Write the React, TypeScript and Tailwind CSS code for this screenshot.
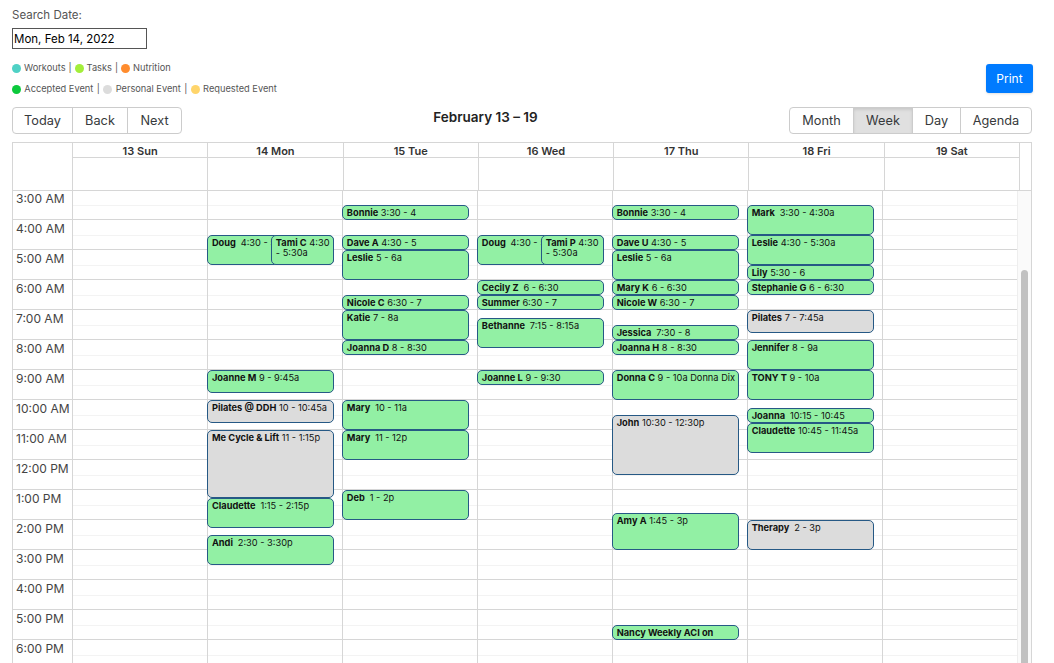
import React from 'react';

type CalEvent = {
  name: string;
  time?: string;
  start: number;
  end: number;
  gray?: boolean;
  left?: number;
};

const HOURS = ['3:00 AM', '4:00 AM', '5:00 AM', '6:00 AM', '7:00 AM', '8:00 AM', '9:00 AM', '10:00 AM', '11:00 AM', '12:00 PM', '1:00 PM', '2:00 PM', '3:00 PM', '4:00 PM', '5:00 PM', '6:00 PM'];
const DAYS = ['13 Sun', '14 Mon', '15 Tue', '16 Wed', '17 Thu', '18 Fri', '19 Sat'];
const SLOT = 30;

const EVENTS: CalEvent[][] = [
  [],
  [
    { name: 'Doug\u00a0', time: '4:30 - 5:30a', start: 4.5, end: 5.5 },
    { name: 'Tami C', time: '4:30 - 5:30a', start: 4.5, end: 5.5, left: 47 },
    { name: 'Joanne M', time: '9 - 9:45a', start: 9, end: 9.75 },
    { name: 'Pilates @ DDH', time: '10 - 10:45a', start: 10, end: 10.75, gray: true },
    { name: 'Me Cycle & Lift', time: '11 - 1:15p', start: 11, end: 13.25, gray: true },
    { name: 'Claudette\u00a0', time: '1:15 - 2:15p', start: 13.25, end: 14.25 },
    { name: 'Andi\u00a0', time: '2:30 - 3:30p', start: 14.5, end: 15.5 },
  ],
  [
    { name: 'Bonnie', time: '3:30 - 4', start: 3.5, end: 4 },
    { name: 'Dave A', time: '4:30 - 5', start: 4.5, end: 5 },
    { name: 'Leslie', time: '5 - 6a', start: 5, end: 6 },
    { name: 'Nicole C', time: '6:30 - 7', start: 6.5, end: 7 },
    { name: 'Katie', time: '7 - 8a', start: 7, end: 8 },
    { name: 'Joanna D', time: '8 - 8:30', start: 8, end: 8.5 },
    { name: 'Mary\u00a0', time: '10 - 11a', start: 10, end: 11 },
    { name: 'Mary\u00a0', time: '11 - 12p', start: 11, end: 12 },
    { name: 'Deb\u00a0', time: '1 - 2p', start: 13, end: 14 },
  ],
  [
    { name: 'Doug\u00a0', time: '4:30 - 5:30a', start: 4.5, end: 5.5 },
    { name: 'Tami P', time: '4:30 - 5:30a', start: 4.5, end: 5.5, left: 47 },
    { name: 'Cecily Z\u00a0', time: '6 - 6:30', start: 6, end: 6.5 },
    { name: 'Summer', time: '6:30 - 7', start: 6.5, end: 7 },
    { name: 'Bethanne\u00a0', time: '7:15 - 8:15a', start: 7.25, end: 8.25 },
    { name: 'Joanne L', time: '9 - 9:30', start: 9, end: 9.5 },
  ],
  [
    { name: 'Bonnie', time: '3:30 - 4', start: 3.5, end: 4 },
    { name: 'Dave U', time: '4:30 - 5', start: 4.5, end: 5 },
    { name: 'Leslie', time: '5 - 6a', start: 5, end: 6 },
    { name: 'Mary K', time: '6 - 6:30', start: 6, end: 6.5 },
    { name: 'Nicole W', time: '6:30 - 7', start: 6.5, end: 7 },
    { name: 'Jessica\u00a0', time: '7:30 - 8', start: 7.5, end: 8 },
    { name: 'Joanna H', time: '8 - 8:30', start: 8, end: 8.5 },
    { name: 'Donna C', time: '9 - 10a Donna Dix', start: 9, end: 10 },
    { name: 'John', time: '10:30 - 12:30p', start: 10.5, end: 12.5, gray: true },
    { name: 'Amy A', time: '1:45 - 3p', start: 13.75, end: 15 },
    { name: 'Nancy Weekly ACI on', start: 17.5, end: 18 },
  ],
  [
    { name: 'Mark\u00a0', time: '3:30 - 4:30a', start: 3.5, end: 4.5 },
    { name: 'Leslie', time: '4:30 - 5:30a', start: 4.5, end: 5.5 },
    { name: 'Lily', time: '5:30 - 6', start: 5.5, end: 6 },
    { name: 'Stephanie G', time: '6 - 6:30', start: 6, end: 6.5 },
    { name: 'Pilates', time: '7 - 7:45a', start: 7, end: 7.75, gray: true },
    { name: 'Jennifer', time: '8 - 9a', start: 8, end: 9 },
    { name: 'TONY T', time: '9 - 10a', start: 9, end: 10 },
    { name: 'Joanna\u00a0', time: '10:15 - 10:45', start: 10.25, end: 10.75 },
    { name: 'Claudette', time: '10:45 - 11:45a', start: 10.75, end: 11.75 },
    { name: 'Therapy\u00a0', time: '2 - 3p', start: 14, end: 15, gray: true },
  ],
  [],
];

function LegendItem({ color, label, last, tight }: { color: string; label: string; last?: boolean; tight?: boolean }) {
  return (
    <span className="flex items-center">
      <span className={`h-[9px] w-[9px] rounded-full ${tight ? 'mr-[3px]' : 'mr-[3.25px]'} ${color}`} />
      <span>{label}</span>
      {!last && <span className={tight ? 'mx-[3px]' : 'mx-[3.5px]'}>|</span>}
    </span>
  );
}

function Toolbar() {
  const btn = 'border border-[#ccc] -ml-px first:ml-0 first:rounded-l last:rounded-r h-[27px] text-[12.75px] text-[#373a3c] flex items-center justify-center';
  return (
    <div className="flex items-start justify-between">
      <div className="flex">
        <button className={`${btn} w-[61px]`}>Today</button>
        <button className={`${btn} w-[56px]`}>Back</button>
        <button className={`${btn} w-[55px]`}>Next</button>
      </div>
      <div className="pt-[2px] text-[13.5px] font-semibold leading-[16px] text-[#222]">February 13 – 19</div>
      <div className="flex">
        <button className={`${btn} w-[65px]`}>Month</button>
        <button className={`${btn} w-[60px] bg-[#e0e0e0] shadow-[inset_0_2px_3px_rgba(0,0,0,0.1)]`}>Week</button>
        <button className={`${btn} w-[49px]`}>Day</button>
        <button className={`${btn} w-[72px]`}>Agenda</button>
      </div>
    </div>
  );
}

function EventBox({ ev }: { ev: CalEvent }) {
  return (
    <div
      className={`absolute overflow-hidden rounded-[5px] border border-[#265985] pl-[4px] pt-[2px] text-[9.25px] leading-[9.5px] text-[#111] ${ev.gray ? 'bg-[#dcdcdc]' : 'bg-[#92f0a4]'}`}
      style={{
        top: (ev.start - 3) * SLOT,
        height: (ev.end - ev.start) * SLOT,
        left: ev.left ? `${ev.left}%` : -1,
        width: ev.left ? '47%' : 'calc(94% + 1px)',
      }}
    >
      <span className="font-bold">{ev.name}</span> {ev.time}
    </div>
  );
}

function Calendar() {
  return (
    <div className="mt-[8px] border border-[#d6d6d6]">
      <div className="flex border-b border-[#d6d6d6] pr-[11px]">
        <div className="w-[59px] shrink-0" />
        <div className="grid flex-1 grid-cols-7">
          {DAYS.map((d) => (
            <div key={d} className="border-l border-[#d6d6d6]">
              <div className="h-[15px] border-b border-[#d6d6d6] text-center text-[11px] font-semibold leading-[17px] text-[#333]">{d}</div>
              <div className="h-[32px]" />
            </div>
          ))}
        </div>
        <div className="w-0 border-l border-[#d6d6d6]" />
      </div>
      <div className="-mt-px flex">
        <div className="w-[59px] shrink-0">
          {HOURS.map((h) => (
            <div key={h} className="h-[30px] border-b border-[#d6d6d6] pl-[3px] pt-[2px] text-[12px] leading-[14px] text-[#444]">
              {h}
            </div>
          ))}
        </div>
        <div className="grid flex-1 grid-cols-7">
          {DAYS.map((d, i) => (
            <div key={d} className="relative border-l border-[#d6d6d6]">
              {HOURS.map((h) => (
                <div key={h} className="h-[30px] border-b border-[#d6d6d6]">
                  <div className="h-[16px] border-b border-[#f3f3f3]" />
                </div>
              ))}
              {EVENTS[i].map((ev, j) => (
                <EventBox key={j} ev={ev} />
              ))}
            </div>
          ))}
        </div>
        <div className="mt-px w-[14.5px] shrink-0 border-l border-[#eee] bg-[#fafafa] px-[3px] pt-[79px]">
          <div className="h-[500px] rounded-full bg-[#c1c1c1]" />
        </div>
      </div>
    </div>
  );
}

export default function App() {
  return (
    <div className="h-[663px] overflow-hidden bg-white px-[12px] pt-[8px] font-['Inter',sans-serif] text-[#555]">
      <div className="flex w-[1021px] items-end justify-between">
        <div>
          <div className="text-[11.5px] leading-[14px]">Search Date:</div>
          <input
            readOnly
            value="Mon, Feb 14, 2022"
            className="mt-[6px] block h-[21px] w-[135px] border border-[#555] pl-[1px] text-[11.5px] text-black outline-none"
          />
          <div className="mt-[13px] flex h-[12px] items-center text-[9.25px]">
            <LegendItem tight color="bg-[#4fd1c5]" label="Workouts" />
            <LegendItem tight color="bg-[#a3ee3a]" label="Tasks" />
            <LegendItem tight color="bg-[#ff8c2e]" label="Nutrition" last />
          </div>
          <div className="mt-[9px] flex h-[12px] items-center text-[9.25px]">
            <LegendItem color="bg-[#0cc93c]" label="Accepted Event" />
            <LegendItem color="bg-[#dcdcdc]" label="Personal Event" />
            <LegendItem color="bg-[#ffd56b]" label="Requested Event" last />
          </div>
        </div>
        <button className="mb-[2px] h-[29px] w-[47px] rounded-[3px] bg-[#007bff] text-[12px] text-white shadow-sm">Print</button>
      </div>
      <div className="mt-[12px] w-[1020px]">
        <Toolbar />
        <Calendar />
      </div>
    </div>
  );
}
